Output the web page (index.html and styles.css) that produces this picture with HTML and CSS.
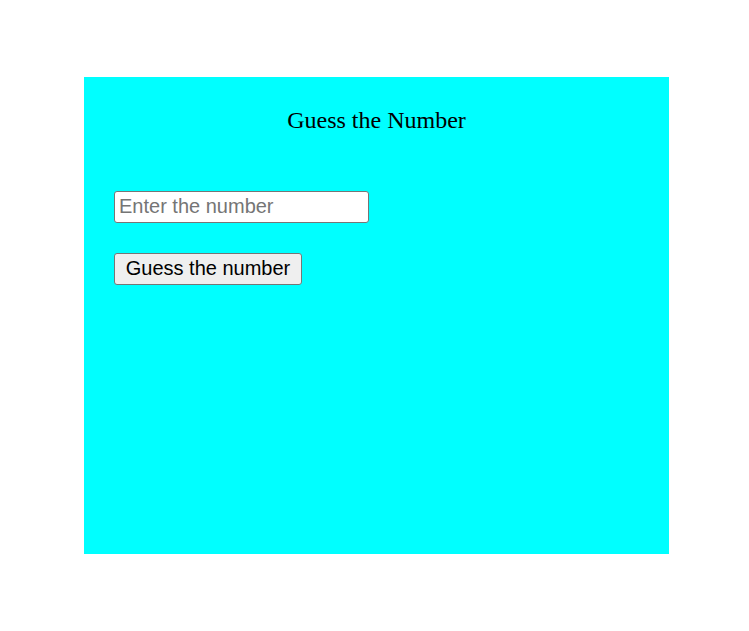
FILE: index.html
```html
<!DOCTYPE html>
<html>
<head>
<meta charset="utf-8">
<link rel="stylesheet" href="styles.css">
</head>
<body>
<div class="game">
  <div class="title">Guess the Number</div>
  <div class="controls">
    <input class="guess-input" type="text" placeholder="Enter the number">
    <button class="guess-btn">Guess the number</button>
  </div>
</div>
</body>
</html>
```
FILE: styles.css
```css
html, body {
  margin: 0;
  padding: 0;
  background: #ffffff;
}
.game {
  box-sizing: border-box;
  width: 585px;
  height: 477px;
  margin: 77px 0 0 84px;
  background: #00ffff;
  padding: 30px 30px 0 30px;
  font-family: "Liberation Serif", "Times New Roman", serif;
}
.title {
  text-align: center;
  font-size: 24px;
  line-height: 27px;
  color: #000;
}
.controls {
  margin-top: 57px;
  display: flex;
  flex-direction: column;
  align-items: flex-start;
  gap: 30px;
}
.guess-input {
  box-sizing: border-box;
  width: 255px;
  height: 32px;
  margin: 0;
  padding: 0 4px 2px 4px;
  border: 1px solid #767676;
  border-radius: 3px;
  background: #fff;
  font-family: "Liberation Sans", Arial, sans-serif;
  font-size: 20px;
  color: #000;
}
.guess-input::placeholder {
  color: #757575;
}
.guess-btn {
  box-sizing: border-box;
  width: 188px;
  height: 32px;
  margin: 0;
  padding: 0 6px 1px 6px;
  border: 1px solid #767676;
  border-radius: 3px;
  background: #efefef;
  font-family: "Liberation Sans", Arial, sans-serif;
  font-size: 20px;
  color: #000;
}
```
